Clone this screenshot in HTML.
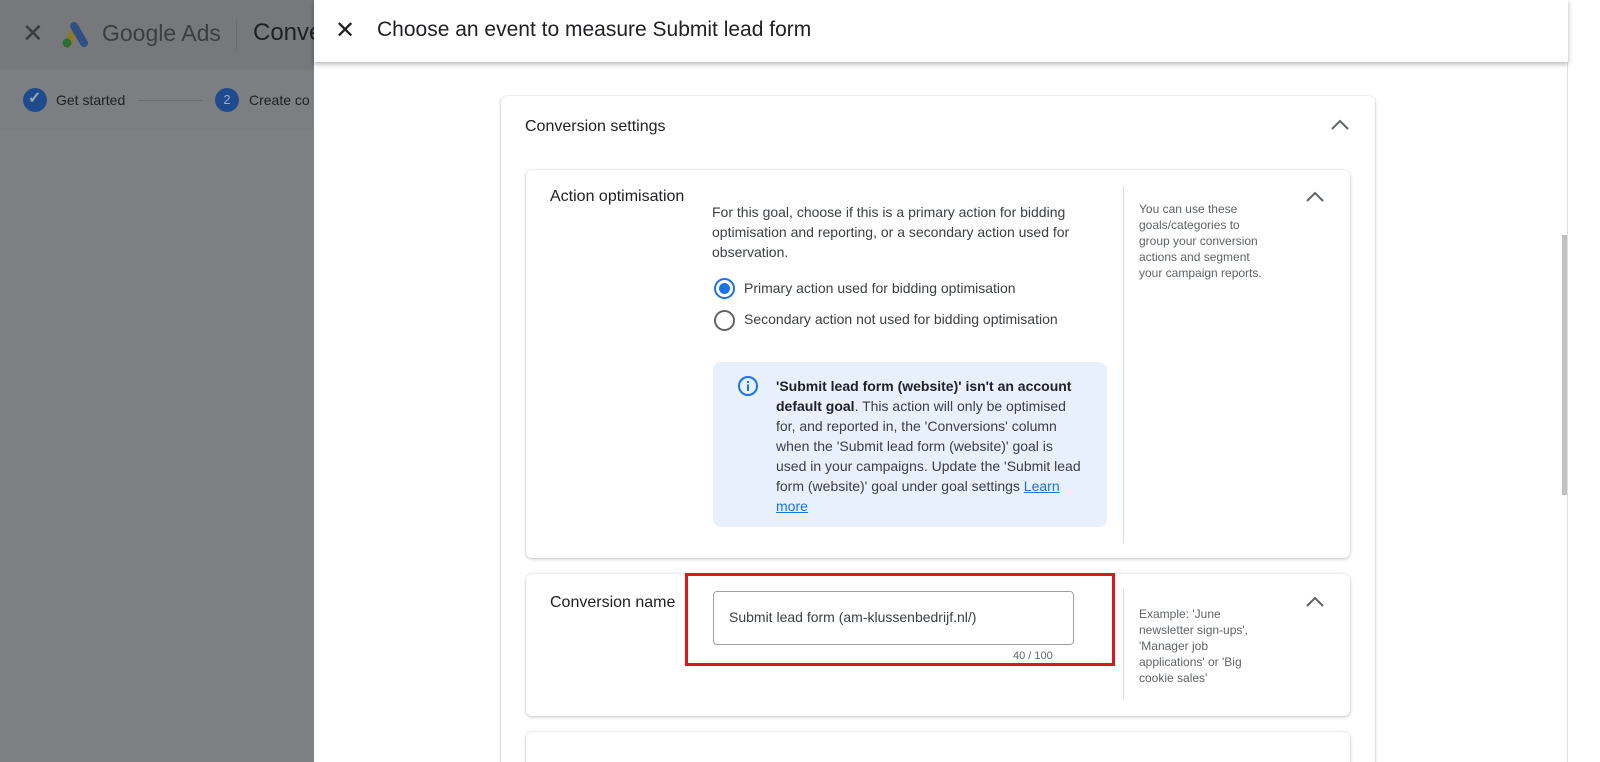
<!DOCTYPE html>
<html><head><meta charset="utf-8"><style>
*{margin:0;padding:0;box-sizing:border-box}
html,body{width:1600px;height:762px;overflow:hidden}
body{position:relative;font-family:"Liberation Sans",Arial,sans-serif;background:#7f8083;color:#202124}
.abs{position:absolute}
.card{position:absolute;background:#fff;border-radius:6px;box-shadow:0 1px 3px rgba(60,64,67,.3),0 0 1px rgba(60,64,67,.2)}
.t{position:absolute;white-space:nowrap}
#wrap{position:absolute;left:0;top:0;width:1600px;height:762px;overflow:hidden}
</style></head><body><div id="wrap">
<!-- backdrop -->
<div class="abs" style="left:0;top:0;width:314px;height:70px;background:#77787b"></div>
<div class="abs" style="left:0;top:70px;width:314px;height:60px;background:#7d7e81"></div>
<div class="t" style="left:22px;top:18px;font-size:26px;color:#3c3d40">✕</div>
<svg class="abs" style="left:60px;top:20px" width="32" height="28" viewBox="0 0 32 28"><path d="M8 24 L16 8" stroke="#8c7a2c" stroke-width="8" stroke-linecap="round"/><path d="M14 6 L24 23" stroke="#2f4f85" stroke-width="8" stroke-linecap="round"/><circle cx="7" cy="23" r="4.5" fill="#2e6b3c"/></svg>
<div class="t" style="left:102px;top:20px;font-size:23px;color:#3c3d40">Google Ads</div>
<div class="abs" style="left:236px;top:20px;width:1px;height:30px;background:#6c6d70"></div>
<div class="t" style="left:253px;top:19px;font-size:24px;color:#1f2022">Conve</div>
<div class="abs" style="left:23px;top:88px;width:24px;height:24px;border-radius:50%;background:#1f4b8e"></div>
<div class="t" style="left:28px;top:88px;font-size:16px;color:#9aa;font-weight:bold">✓</div>
<div class="t" style="left:56px;top:92px;font-size:14px;color:#202124">Get started</div>
<div class="abs" style="left:138px;top:100px;width:64px;height:1px;background:#6a6b6e"></div>
<div class="abs" style="left:215px;top:88px;width:24px;height:24px;border-radius:50%;background:#1f4b8e;color:#9aaccc;font-size:13px;text-align:center;line-height:24px">2</div>
<div class="t" style="left:249px;top:92px;font-size:14px;color:#202124">Create co</div>
<!-- panel -->
<div class="abs" style="left:314px;top:0;width:1286px;height:762px;background:#fff"></div>
<div class="abs" style="left:314px;top:0;width:1254px;height:62px;background:#fff;box-shadow:0 2px 5px rgba(0,0,0,.3);z-index:2"></div>
<div class="t" style="left:335px;top:16px;font-size:24px;color:#202124;z-index:3">✕</div>
<div class="t" style="left:377px;top:18px;font-size:21px;color:#202124;z-index:3">Choose an event to measure Submit lead form</div>
<div class="abs" style="left:1562px;top:235px;width:6px;height:260px;background:#c1c1c1"></div>
<div class="abs" style="left:1567px;top:62px;width:1px;height:700px;background:#e0e0e0"></div>
<!-- outer card -->
<div class="card" style="left:501px;top:96px;width:874px;height:700px"></div>
<div class="t" style="left:525px;top:118px;font-size:16px">Conversion settings</div>
<svg class="abs" style="left:1330px;top:118px" width="20" height="14"><path d="M2 11 L10 3 L18 11" stroke="#5f6368" stroke-width="2" fill="none"/></svg>
<!-- card 1 -->
<div class="card" style="left:526px;top:170px;width:824px;height:388px"></div>
<div class="t" style="left:550px;top:188px;font-size:16px">Action optimisation</div>
<div class="abs" style="left:712px;top:202px;width:380px;font-size:14px;line-height:20px;color:#3c4043">For this goal, choose if this is a primary action for bidding optimisation and reporting, or a secondary action used for observation.</div>
<div class="abs" style="left:714px;top:278px;width:21px;height:21px;border-radius:50%;border:2px solid #1a73e8"></div>
<div class="abs" style="left:719px;top:283px;width:11px;height:11px;border-radius:50%;background:#1a73e8"></div>
<div class="t" style="left:744px;top:280px;font-size:14px;color:#3c4043">Primary action used for bidding optimisation</div>
<div class="abs" style="left:714px;top:310px;width:21px;height:21px;border-radius:50%;border:2px solid #5f6368"></div>
<div class="t" style="left:744px;top:311px;font-size:14px;color:#3c4043">Secondary action not used for bidding optimisation</div>
<div class="abs" style="left:713px;top:362px;width:394px;height:165px;background:#e8f0fe;border-radius:8px"></div>
<svg class="abs" style="left:737px;top:375px" width="22" height="22"><circle cx="11" cy="11" r="9" stroke="#1a73e8" stroke-width="2" fill="none"/><rect x="10" y="9.5" width="2" height="6.5" fill="#1a73e8"/><rect x="10" y="6" width="2" height="2" fill="#1a73e8"/></svg>
<div class="abs" style="left:776px;top:376px;width:308px;font-size:14px;line-height:20px;color:#3c4043"><b style="color:#202124">'Submit lead form (website)' isn't an account default goal</b>. This action will only be optimised for, and reported in, the 'Conversions' column when the 'Submit lead form (website)' goal is used in your campaigns. Update the 'Submit lead form (website)' goal under goal settings <span style="color:#1a73e8;text-decoration:underline">Learn more</span></div>
<div class="abs" style="left:1123px;top:186px;width:1px;height:357px;background:#dadce0"></div>
<div class="abs" style="left:1139px;top:201px;width:128px;font-size:12px;line-height:16px;color:#5f6368">You can use these goals/categories to group your conversion actions and segment your campaign reports.</div>
<svg class="abs" style="left:1305px;top:190px" width="20" height="14"><path d="M2 11 L10 3 L18 11" stroke="#5f6368" stroke-width="2" fill="none"/></svg>
<!-- card 2 -->
<div class="card" style="left:526px;top:574px;width:824px;height:142px"></div>
<div class="t" style="left:550px;top:594px;font-size:16px">Conversion name</div>
<div class="abs" style="left:713px;top:591px;width:361px;height:54px;border:1px solid #9aa0a6;border-radius:4px"></div>
<div class="t" style="left:729px;top:609px;font-size:14px;color:#3c4043">Submit lead form (am-klussenbedrijf.nl/)</div>
<div class="t" style="left:1013px;top:650px;font-size:11px;color:#5f6368">40 / 100</div>
<div class="abs" style="left:685px;top:573px;width:430px;height:93px;border:3px solid #e0161c"></div>
<div class="abs" style="left:1123px;top:589px;width:1px;height:110px;background:#dadce0"></div>
<div class="abs" style="left:1139px;top:606px;width:118px;font-size:12px;line-height:16px;color:#5f6368">Example: 'June newsletter sign-ups', 'Manager job applications' or 'Big cookie sales'</div>
<svg class="abs" style="left:1305px;top:595px" width="20" height="14"><path d="M2 11 L10 3 L18 11" stroke="#5f6368" stroke-width="2" fill="none"/></svg>
<!-- card 3 -->
<div class="card" style="left:526px;top:732px;width:824px;height:60px"></div>
</div></body></html>
